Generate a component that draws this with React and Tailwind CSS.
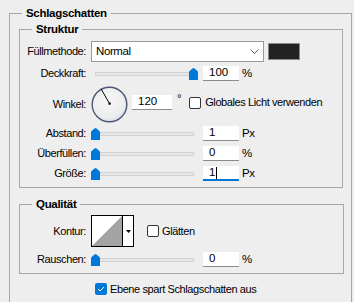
import React from "react";

function Thumb({ right }) {
  return (
    <svg
      width="9"
      height="12"
      viewBox="0 0 9 12"
      className={`absolute top-0 ${right ? "right-0" : "left-0"}`}
    >
      <path d="M0 4.2 Q0 3.4 0.8 2.7 L3.6 0.4 Q4.5 -0.2 5.4 0.4 L8.2 2.7 Q9 3.4 9 4.2 V12 H0 Z" fill="#0078d7" />
    </svg>
  );
}

function Slider({ full }) {
  return (
    <div className="relative h-[12px] w-[107px] shrink-0">
      <div className="absolute left-[4px] right-[4px] top-[4px] h-[4px] border border-[#d2d2d2] bg-[#e6e6e6]" />
      <Thumb right={full} />
    </div>
  );
}

function Field({ value, width = "w-[36px]", focus }) {
  return (
    <div
      className={`flex h-[15px] ${width} shrink-0 items-center bg-white pl-[6px] text-[11.5px] leading-none tracking-normal ${
        focus ? "border-b-2 border-[#0078d7]" : "border-b border-[#8c8c8c]"
      }`}
    >
      {value}
      {focus && <span className="ml-px inline-block h-[12px] w-px bg-black" />}
    </div>
  );
}

function Check({ checked }) {
  if (checked) {
    return (
      <div className="flex h-[12px] w-[12px] shrink-0 items-center justify-center rounded-[2px] bg-[#0078d7]">
        <svg width="8" height="6" viewBox="0 0 8 6">
          <path d="M1 3 L3 5 L7 1" fill="none" stroke="#fff" strokeWidth="1" />
        </svg>
      </div>
    );
  }
  return <div className="h-[12px] w-[12px] shrink-0 rounded-[2px] border border-[#333] bg-white" />;
}

function Label({ children }) {
  return <div className="w-[66px] shrink-0 whitespace-nowrap text-right">{children}</div>;
}

function Dial() {
  return (
    <svg width="37" height="37" viewBox="0 0 37 37" className="shrink-0">
      <defs>
        <radialGradient id="dialFill" cx="0.45" cy="0.4" r="0.6">
          <stop offset="0" stopColor="#f7f7f7" />
          <stop offset="0.8" stopColor="#ededed" />
          <stop offset="1" stopColor="#dadde3" />
        </radialGradient>
      </defs>
      <circle cx="18.5" cy="18.5" r="17.3" fill="url(#dialFill)" stroke="#4b5676" strokeWidth="1.4" />
      <line x1="18.5" y1="17.5" x2="10" y2="2.8" stroke="#000" strokeWidth="1" />
      <rect x="17.5" y="16.5" width="2.2" height="2.2" fill="#000" />
    </svg>
  );
}

function Group({ title, className = "", children }) {
  return (
    <div className={`border border-[#a6a6a6] ${className}`}>
      <div className="-mt-[8px] ml-[12px] block w-fit bg-[#eeeeee] px-[4px] text-[11.5px] font-bold leading-[14px] tracking-[-0.3px]">
        {title}
      </div>
      {children}
    </div>
  );
}

export default function App() {
  return (
    <div className="h-[302px] w-[354px] overflow-hidden bg-[#eeeeee] pt-[13px] font-['Liberation_Sans',Arial,sans-serif] text-[11px] tracking-[-0.4px] text-black">
      <div className="ml-[9px] h-[320px] w-[343px] border-l border-r border-t border-[#a6a6a6]">
        <div className="-mt-[8px] ml-[12px] w-fit bg-[#eeeeee] px-[4px] text-[11.5px] font-bold leading-[14px] tracking-[-0.3px]">
          Schlagschatten
        </div>

        <Group title="Struktur" className="ml-[9px] mt-[9px] w-[324px] pb-[6px]">
          <div className="mt-[5px] flex h-[21px] items-center gap-[5px]">
            <Label>Füllmethode:</Label>
            <div className="flex h-[21px] w-[173px] items-center justify-between border border-[#9a9a9a] bg-white pl-[4px] pr-[4px] text-[11.5px]">
              <span>Normal</span>
              <svg width="9" height="5" viewBox="0 0 9 5">
                <path d="M0.5 0.5 L4.5 4.5 L8.5 0.5" fill="none" stroke="#606060" strokeWidth="1" />
              </svg>
            </div>
            <div className="ml-[-1px] h-[17px] w-[32px] border border-[#8a8a8a] bg-[#222222]" />
          </div>

          <div className="mt-[4px] flex h-[15px] items-center gap-[5px]">
            <Label>Deckkraft:</Label>
            <Slider full />
            <Field value="100" />
            <span className="-ml-[2px] text-[11.5px]">%</span>
          </div>

          <div className="mt-[5px] flex h-[37px] items-center gap-[5px]">
            <Label>Winkel:</Label>
            <Dial />
            <div className="-ml-[1px] -mt-[4px] flex items-center whitespace-nowrap">
              <Field value="120" width="w-[40px]" />
              <span className="ml-[5px] -mt-[8px] text-[11.5px]">°</span>
              <div className="ml-[8px] flex items-center gap-[4px]">
                <Check />
                <span>Globales Licht verwenden</span>
              </div>
            </div>
          </div>

          <div className="mt-[3px] flex h-[15px] items-center gap-[5px]">
            <Label>Abstand:</Label>
            <Slider />
            <Field value="1" />
            <span className="-ml-[2px] text-[11.5px]">Px</span>
          </div>

          <div className="mt-[5px] flex h-[15px] items-center gap-[5px]">
            <Label>Überfüllen:</Label>
            <Slider />
            <Field value="0" />
            <span className="-ml-[2px] text-[11.5px]">%</span>
          </div>

          <div className="mt-[5px] flex h-[15px] items-center gap-[5px]">
            <Label>Größe:</Label>
            <Slider />
            <Field value="1" focus />
            <span className="-ml-[2px] text-[11.5px]">Px</span>
          </div>
        </Group>

        <Group title="Qualität" className="ml-[9px] mt-[16px] w-[325px] pb-[6px]">
          <div className="mt-[4px] flex h-[32px] items-center gap-[5px]">
            <Label>Kontur:</Label>
            <div className="flex h-[32px] w-[43px] border border-black bg-white">
              <svg width="30" height="30" viewBox="0 0 30 30" className="shrink-0">
                <polygon points="0,30 30,0 30,30" fill="#a3a3a3" />
              </svg>
              <div className="flex flex-1 items-center justify-center border-l border-black">
                <svg width="5" height="3" viewBox="0 0 5 3">
                  <polygon points="0,0 5,0 2.5,3" fill="#000" />
                </svg>
              </div>
            </div>
            <div className="ml-[8px] flex items-center gap-[3px]">
              <Check />
              <span>Glätten</span>
            </div>
          </div>

          <div className="mt-[5px] flex h-[15px] items-center gap-[5px]">
            <Label>Rauschen:</Label>
            <Slider />
            <Field value="0" />
            <span className="-ml-[2px] text-[11.5px]">%</span>
          </div>
        </Group>

        <div className="ml-[85px] mt-[7px] flex items-center gap-[3px]">
          <Check checked />
          <span>Ebene spart Schlagschatten aus</span>
        </div>
      </div>
    </div>
  );
}
